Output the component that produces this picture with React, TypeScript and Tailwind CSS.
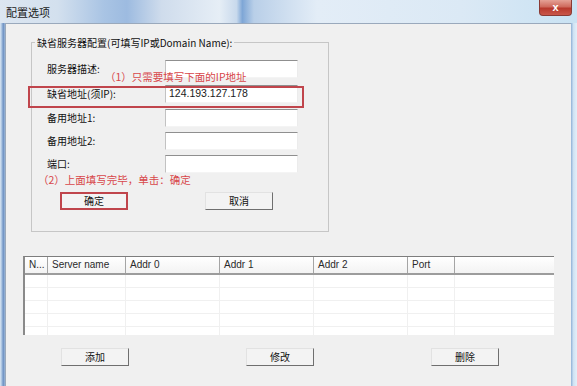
import React from "react";

const cjk = "font-['Noto_Sans_CJK_SC','Noto_Sans',sans-serif]";
const latin = "font-['Liberation_Sans','Noto_Sans_CJK_SC',sans-serif]";

function TextBox({ value }: { value?: string }) {
    return (
        <div className={`w-[133px] h-[18px] bg-white border-t border-l border-r border-b border-t-[#8f8f8f] border-l-[#c2c2c2] border-r-[#ececec] border-b-[#f4f4f4] pl-[3px] text-[10.5px] leading-[14px] text-[#1a1a1a] ${latin}`}>
            {value}
        </div>
    );
}

function Row({ label, value, className = "" }: { label: string; value?: string; className?: string }) {
    return (
        <div className={`flex items-center h-[18px] ${className}`}>
            <span className="w-[118px] text-[10px] text-[#111] leading-none">{label}</span>
            <TextBox value={value} />
        </div>
    );
}

function WinButton({ label, highlight = false }: { label: string; highlight?: boolean }) {
    return (
        <button
            className={
                "w-[68px] h-[18px] flex items-center justify-center text-[10px] text-[#111] leading-none bg-[#f3f3f3] " +
                (highlight
                    ? "border-2 border-[#c0454c]"
                    : "border border-t-[#e2e2e2] border-l-[#e2e2e2] border-r-[#6f6f6f] border-b-[#6f6f6f]")
            }
        >
            {label}
        </button>
    );
}

const columns = ["N...", "Server name", "Addr 0", "Addr 1", "Addr 2", "Port", ""];

function ServerTable() {
    return (
        <div className={`ml-[17px] mt-[24px] w-[531px] h-[79px] overflow-hidden bg-white border-t border-l-2 border-t-[#7d7d7d] border-l-[#8a8a8a] ${latin}`}>
            <div className="grid grid-cols-[23px_78px_94px_94px_94px_47px_1fr] h-[18px] border-b-2 border-[#9c9c9c] bg-[linear-gradient(#ffffff,#f3f3f3)]">
                {columns.map((c, i) => (
                    <div
                        key={i}
                        className={`pl-[4px] text-[10px] leading-[16px] text-[#2a2a2a] whitespace-nowrap ${i < 6 ? "border-r border-[#a5a5a5]" : ""}`}
                    >
                        {c}
                    </div>
                ))}
            </div>
            {[0, 1, 2, 3, 4].map((r) => (
                <div key={r} className="grid grid-cols-[23px_78px_94px_94px_94px_47px_1fr] h-[13px] border-b border-[#f0f0f0]">
                    {columns.map((_, i) => (
                        <div key={i} className={i < 6 ? "border-r border-[#f0f0f0]" : ""} />
                    ))}
                </div>
            ))}
        </div>
    );
}

export default function App() {
    return (
        <div className={`w-[577px] h-[386px] overflow-hidden flex flex-col bg-[#cfe0f1] ${cjk}`}>
            <div className="h-[23px] flex justify-between bg-[linear-gradient(90deg,#dce6f1_0%,#d3e0ee_10%,#a9c4e4_18%,#9dbbe0_22%,#cfdcec_28%,#e6eef6_38%,#c8d9ec_41%,#7ea6d6_42%,#b9cfe8_44%,#e3edf7_55%,#dbe9f5_80%,#c9e2f3_100%)]">
                <span className="pl-[6px] pt-[5px] text-[11px] leading-[14px] text-[#1b1b1b]">配置选项</span>
                <div className="mr-[5px] w-[33px] h-[16px] rounded-b-[4px] border border-t-0 border-[#8a3a34] bg-[linear-gradient(#e5a196,#cf6a5d_45%,#b8392d_55%,#c9574a)] flex items-center justify-center">
                    <span className={`text-white text-[11px] font-bold leading-none ${latin}`}>x</span>
                </div>
            </div>
            <div className="flex-1 flex min-h-0">
                <div className="w-[5px] bg-[linear-gradient(90deg,#dbe7f3_0%,#a7c1df_35%,#6e91c3_65%,#9bb7d8_100%)]" />
                <div className="flex-1 flex flex-col bg-[#f0f0f0] border-t border-l border-[#9aa9bc]">
                    <div className="relative ml-[25px] mt-[18px] w-[298px] h-[190px] border border-[#c6c6c6]">
                        <span className="absolute -top-[7px] left-[3px] px-[2px] bg-[#f0f0f0] text-[10px] leading-[13px] text-[#111]">
                            缺省服务器配置(可填写IP或Domain Name):
                        </span>
                        <span className="absolute top-[27px] left-[73px] text-[10.5px] leading-[13px] text-[#d8474a] whitespace-nowrap">
                            （1）只需要填写下面的IP地址
                        </span>
                        <div className="absolute top-[43px] -left-[4px] w-[276px] h-[22px] border-2 border-[#c0454c]" />
                        <div className="flex flex-col pt-[17px]">
                            <div className="pl-[15px]">
                                <Row label="服务器描述:" />
                                <Row label="缺省地址(须IP):" value="124.193.127.178" className="mt-[7px]" />
                                <Row label="备用地址1:" className="mt-[6px]" />
                                <Row label="备用地址2:" className="mt-[5px]" />
                                <Row label="端口:" className="mt-[5px]" />
                            </div>
                            <span className="pl-[6px] h-[14px] text-[10.5px] leading-[14px] text-[#d8474a]">（2）上面填写完毕，单击：确定</span>
                            <div className="flex gap-[77px] pl-[28px] mt-[5px]">
                                <WinButton label="确定" highlight />
                                <WinButton label="取消" />
                            </div>
                        </div>
                    </div>
                    <ServerTable />
                    <div className="flex gap-[117px] ml-[55px] mt-[13px]">
                        <WinButton label="添加" />
                        <WinButton label="修改" />
                        <WinButton label="删除" />
                    </div>
                </div>
                <div className="w-[6px] bg-[linear-gradient(90deg,#8fb0d6_0%,#cfe2f3_40%,#e4eff8_100%)]" />
            </div>
        </div>
    );
}
